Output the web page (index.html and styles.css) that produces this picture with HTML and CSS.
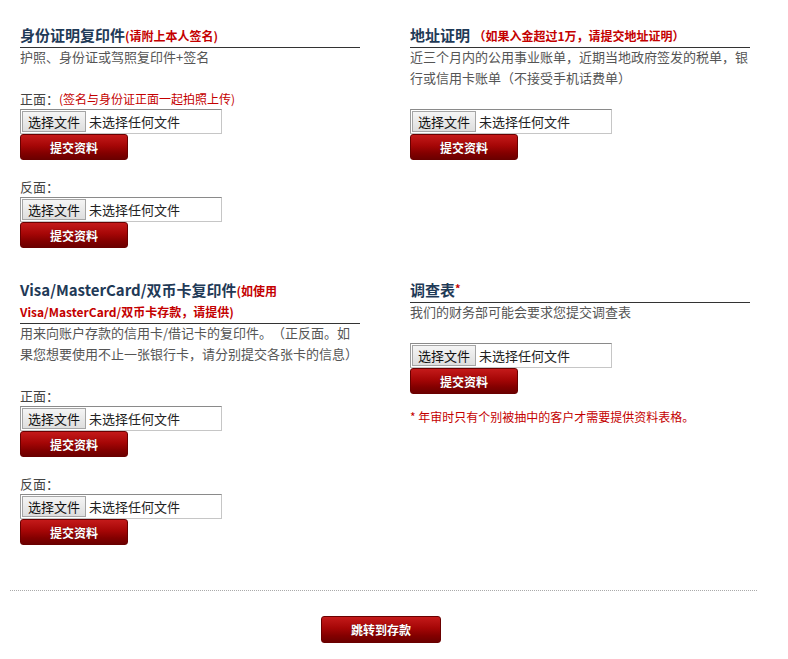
FILE: index.html
```html
<!DOCTYPE html>
<html lang="zh-CN">
<head>
<meta charset="utf-8">
<title>上传资料</title>
<link rel="stylesheet" href="styles.css">
</head>
<body>
<div class="page">
  <div class="sections">
    <section class="block">
      <h3 class="title">身份证明复印件<span class="red-note">(请附上本人签名)</span></h3>
      <p class="desc">护照、身份证或驾照复印件+签名</p>
      <div class="field">
        <div class="label">正面：<span class="label-red">(签名与身份证正面一起拍照上传)</span></div>
        <label class="file"><span class="file-btn">选择文件</span><span class="file-name">未选择任何文件</span></label>
        <button class="submit" type="button">提交资料</button>
      </div>
      <div class="field">
        <div class="label">反面：</div>
        <label class="file"><span class="file-btn">选择文件</span><span class="file-name">未选择任何文件</span></label>
        <button class="submit" type="button">提交资料</button>
      </div>
    </section>

    <section class="block">
      <h3 class="title">地址证明 <span class="red-note">（如果入金超过1万，请提交地址证明）</span></h3>
      <p class="desc">近三个月内的公用事业账单，近期当地政府签发的税单，银行或信用卡账单（不接受手机话费单）</p>
      <div class="field">
        <label class="file"><span class="file-btn">选择文件</span><span class="file-name">未选择任何文件</span></label>
        <button class="submit" type="button">提交资料</button>
      </div>
    </section>

    <section class="block">
      <h3 class="title">Visa/MasterCard/双币卡复印件<span class="red-note">(如使用<br>Visa/MasterCard/双币卡存款，请提供)</span></h3>
      <p class="desc">用来向账户存款的信用卡/借记卡的复印件。（正反面。如果您想要使用不止一张银行卡，请分别提交各张卡的信息）</p>
      <div class="field">
        <div class="label">正面：</div>
        <label class="file"><span class="file-btn">选择文件</span><span class="file-name">未选择任何文件</span></label>
        <button class="submit" type="button">提交资料</button>
      </div>
      <div class="field">
        <div class="label">反面：</div>
        <label class="file"><span class="file-btn">选择文件</span><span class="file-name">未选择任何文件</span></label>
        <button class="submit" type="button">提交资料</button>
      </div>
    </section>

    <section class="block">
      <h3 class="title">调查表<span class="star">*</span></h3>
      <p class="desc">我们的财务部可能会要求您提交调查表</p>
      <div class="field">
        <label class="file"><span class="file-btn">选择文件</span><span class="file-name">未选择任何文件</span></label>
        <button class="submit" type="button">提交资料</button>
      </div>
      <p class="note">* 年审时只有个别被抽中的客户才需要提供资料表格。</p>
    </section>
  </div>

  <div class="divider"></div>
  <div class="footer">
    <button class="submit submit-wide" type="button">跳转到存款</button>
  </div>
</div>
</body>
</html>
```

FILE: styles.css
```css
* { box-sizing: border-box; }

body {
  margin: 0;
  background: #fff;
  font-family: "Noto Sans CJK SC", "Noto Sans", sans-serif;
  font-size: 13px;
  color: #555;
  text-spacing-trim: space-all;
}

.page {
  width: 762px;
}

.sections {
  display: grid;
  grid-template-columns: 340px 340px;
  column-gap: 50px;
  row-gap: 31px;
  padding: 24px 0 0 20px;
}

.block {
  display: flex;
  flex-direction: column;
  align-items: flex-start;
}

.title {
  margin: 0;
  width: 100%;
  padding-bottom: 2px;
  font-size: 15px;
  line-height: 21px;
  font-weight: 700;
  color: #1f3a57;
  border-bottom: 1px solid #333;
}

.red-note {
  font-size: 12px;
  line-height: 1;
  font-weight: 700;
  color: #c40000;
}

.star {
  font-size: 11px;
  line-height: 1;
  color: #c40000;
  vertical-align: 3px;
}

.desc {
  margin: -2px 0 21px;
  width: 100%;
  line-height: 21px;
  color: #555;
}

.field {
  display: flex;
  flex-direction: column;
  align-items: flex-start;
}

.field + .field {
  margin-top: 16px;
}

.label {
  line-height: 21px;
  color: #444;
}

.label-red {
  font-size: 12px;
  line-height: 1;
  color: #c40000;
}

.file {
  display: flex;
  align-items: center;
  width: 202px;
  height: 25px;
  padding: 1px;
  border: 1px solid #c6c6c6;
  border-top-color: #8a8a8a;
  border-left-color: #9a9a9a;
  background: #fff;
}

.file-btn {
  display: flex;
  align-items: center;
  justify-content: center;
  width: 64px;
  height: 21px;
  border: 1px solid #a5a5a5;
  background: linear-gradient(#f5f5f5, #dedede);
  color: #111;
  font-size: 13px;
}

.file-name {
  margin-left: 3px;
  color: #222;
  font-size: 13px;
}

.submit {
  width: 108px;
  height: 26px;
  padding: 0;
  border: 1px solid #6a0000;
  border-radius: 3px;
  background: linear-gradient(#c41a1a 0%, #a50606 45%, #830000 75%, #6c0000 100%);
  color: #fff;
  font-family: "Noto Sans CJK SC", sans-serif;
  font-size: 12px;
  font-weight: 700;
  text-shadow: 0 0 1px #500;
  cursor: pointer;
}

.note {
  margin: 12px 0 0;
  line-height: 21px;
  font-size: 12px;
  color: #c40000;
}

.divider {
  margin: 45px 0 0 10px;
  width: 747px;
  border-top: 1px dotted #aaa;
}

.footer {
  display: flex;
  justify-content: center;
  padding-top: 25px;
}

.submit-wide {
  width: 120px;
  height: 27px;
}
```
